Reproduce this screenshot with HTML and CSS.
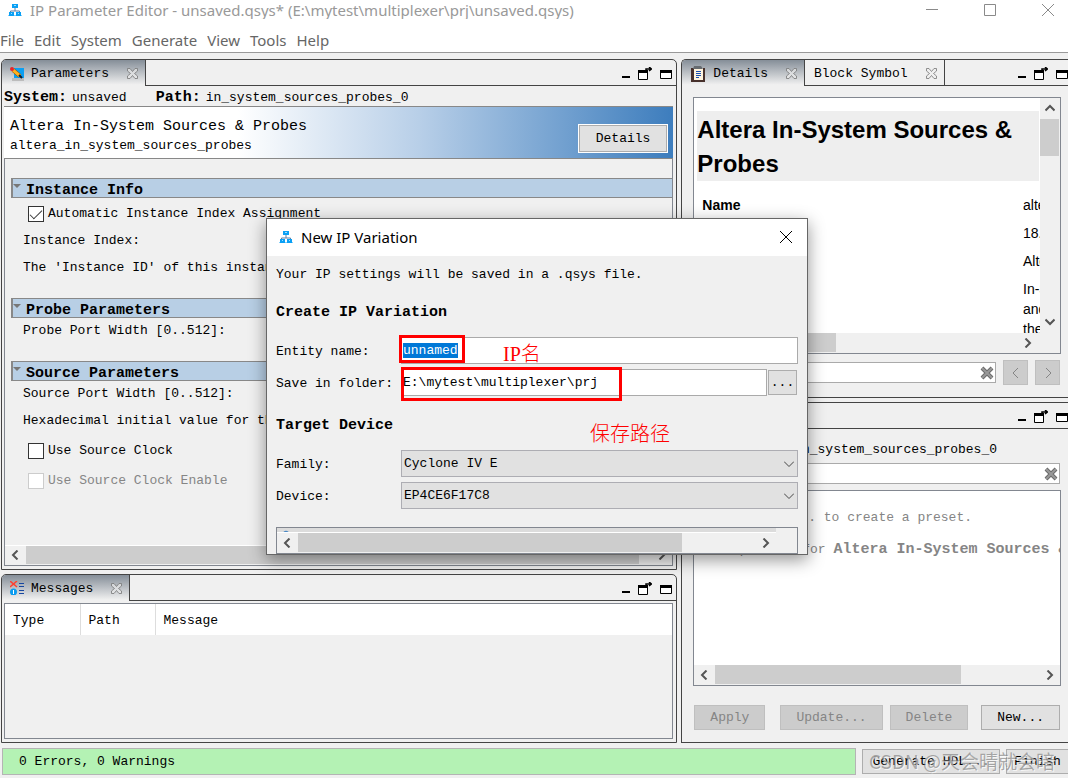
FILE: index.html
```html
<!DOCTYPE html>
<html lang="en">
<head>
<meta charset="utf-8">
<title>IP Parameter Editor</title>
<link rel="stylesheet" href="styles.css">
</head>
<body>
<svg class="defs" aria-hidden="true">
  <symbol id="app" viewBox="0 0 14 14">
    <path d="M7 5v3M2.500 10V8h9v2" fill="none" stroke="#5a7fa8" stroke-width="1"/>
    <path d="M4 1h6v4H4zM1 9h5v4H1zM8 9h5v4H8z" fill="#0aa0f5"/>
    <path d="M6 2h2v1H6zM3 10h1v1H3zM10 10h1v1h-1z" fill="#9fe0ff"/>
    <path d="M0 12.500h14" stroke="#0aa0f5" stroke-opacity=".5"/>
  </symbol>
  <symbol id="close-tab" viewBox="0 0 11 11">
    <path d="M.5.5h2.500l2.500 3 2.500-3h2.500v2.500l-3 2.500 3 2.500v2.500h-2.500l-2.500-3-2.500 3h-2.500v-2.500l3-2.500-3-2.500z" fill="#eee" fill-opacity=".6" stroke="#777" stroke-width=".8"/>
  </symbol>
  <symbol id="min" viewBox="0 0 8 14"><path d="M0 9h8v2H0z" fill="#000"/></symbol>
  <symbol id="float" viewBox="0 0 14 14">
    <path d="M.5 4h9v8.500h-9z" fill="#fff" stroke="#000"/><path d="M0 3h10v3H0z" fill="#000"/>
    <path d="M8 5V2h5M11 0l2.500 2L11 4" fill="none" stroke="#000" stroke-width="1.500"/>
  </symbol>
  <symbol id="max" viewBox="0 0 12 14"><path d="M.5 3.500h11v8H.5z" fill="#fff" stroke="#000"/><path d="M0 3h12v3H0z" fill="#000"/></symbol>
  <symbol id="arrow-left" viewBox="0 0 10 10"><path d="M7.500.5L3 5l4.500 4.500" fill="none" stroke="#555" stroke-width="2"/></symbol>
  <symbol id="arrow-right" viewBox="0 0 10 10"><path d="M2.500.5L7 5 2.500 9.500" fill="none" stroke="#555" stroke-width="2"/></symbol>
  <symbol id="arrow-up" viewBox="0 0 10 10"><path d="M.5 7.500L5 3l4.500 4.500" fill="none" stroke="#555" stroke-width="2"/></symbol>
  <symbol id="arrow-down" viewBox="0 0 10 10"><path d="M.5 2.500L5 7l4.500-4.500" fill="none" stroke="#555" stroke-width="2"/></symbol>
  <symbol id="clear" viewBox="0 0 14 14"><path d="M2 2l10 10M12 2L2 12" stroke="#6a6a6a" stroke-width="4"/><path d="M2 2l10 10M12 2L2 12" stroke="#989898" stroke-width="2"/></symbol>
  <symbol id="cross" viewBox="0 0 12 12"><path d="M0 0l12 12M12 0L0 12" stroke="currentColor"/></symbol>
</svg>

<header class="titlebar">
  <svg class="i14"><use href="#app"/></svg>
  <span class="title">IP Parameter Editor - unsaved.qsys* (E:\mytest\multiplexer\prj\unsaved.qsys)</span>
  <button class="win" aria-label="Minimize"><svg class="i12" viewBox="0 0 12 12"><path d="M0 5.500h12" stroke="currentColor"/></svg></button>
  <button class="win" aria-label="Maximize"><svg class="i12" viewBox="0 0 12 12"><path d="M.5.5h11v11H.5z" fill="none" stroke="currentColor"/></svg></button>
  <button class="win" aria-label="Close"><svg class="i12"><use href="#cross"/></svg></button>
</header>
<nav class="menubar">
  <button>File</button><button>Edit</button><button>System</button><button>Generate</button><button>View</button><button>Tools</button><button>Help</button>
</nav>

<main class="workspace">
  <div class="column left">
    <section class="panel parameters">
      <div class="strip">
        <div class="tab active">
          <svg class="i14" viewBox="0 0 14 14"><path d="M2 11h12v3H2z" fill="#bcbcbc"/><path d="M4 1h10v10H4z" fill="#0b9ff2"/><path d="M3 3l7 6" stroke="#7a4a10" stroke-width="4"/><path d="M3 3l7 6" stroke="#ffb020" stroke-width="3"/><path d="M9 8l3 3" stroke="#123" stroke-width="2"/><circle cx="2" cy="2" r="2" fill="#e8252a"/></svg>
          <span>Parameters</span><button class="x" aria-label="Close tab"><svg class="i11"><use href="#close-tab"/></svg></button>
        </div>
        <div class="rest"><svg class="w8"><use href="#min"/></svg><svg class="i14"><use href="#float"/></svg><svg class="w12"><use href="#max"/></svg></div>
      </div>
      <div class="path"><b>System:</b><span class="sys">unsaved</span><b>Path:</b><span>in_system_sources_probes_0</span></div>
      <div class="banner">
        <div class="ident"><div class="name">Altera In-System Sources &amp; Probes</div><div>altera_in_system_sources_probes</div></div>
        <button class="btn">Details</button>
      </div>
      <div class="pane params">
        <div class="form">
          <h2 class="bar">Instance Info</h2>
          <label class="check first"><input type="checkbox" checked>Automatic Instance Index Assignment</label>
          <p>Instance Index:</p>
          <p>The 'Instance ID' of this instance</p>
          <h2 class="bar next">Probe Parameters</h2>
          <p class="tight">Probe Port Width [0..512]:</p>
          <h2 class="bar next">Source Parameters</h2>
          <p class="tight">Source Port Width [0..512]:</p>
          <p>Hexadecimal initial value for the</p>
          <label class="check"><input type="checkbox">Use Source Clock</label>
          <label class="check off"><input type="checkbox" disabled>Use Source Clock Enable</label>
        </div>
        <div class="hscroll"><svg class="i10"><use href="#arrow-left"/></svg><div class="track"><div class="thumb full"></div></div><svg class="i10"><use href="#arrow-right"/></svg></div>
      </div>
    </section>
    <section class="panel messages">
      <div class="strip">
        <div class="tab active">
          <svg class="i14" viewBox="0 0 14 14"><path d="M0 0l7 6M7 0L0 6" stroke="#ff4030" stroke-width="1.500"/><circle cx="3.500" cy="11" r="3.500" fill="#0a9cf0"/><path d="M3.500 9v4" stroke="#fff"/><path d="M9 2.500h5M9 5.500h5M9 9.500h5M9 12.500h5" stroke="#1747a0"/></svg>
          <span>Messages</span><button class="x" aria-label="Close tab"><svg class="i11"><use href="#close-tab"/></svg></button>
        </div>
        <div class="rest"><svg class="w8"><use href="#min"/></svg><svg class="i14"><use href="#float"/></svg><svg class="w12"><use href="#max"/></svg></div>
      </div>
      <div class="pane msgs">
        <table><thead><tr><th class="c">Type</th><th class="c">Path</th><th>Message</th></tr></thead></table>
      </div>
    </section>
  </div>

  <div class="column right">
    <section class="panel details">
      <div class="strip">
        <div class="tab active">
          <svg class="i16" viewBox="0 0 16 16"><path d="M1 2h14v14H1z" fill="#47302b"/><path d="M4 2h9v12H4z" fill="#fff3dd"/><path d="M4 0h7l2 3H3z" fill="#666b70"/><path d="M6 5.500h5M6 7.500h5M6 9.500h5M6 11.500h3" stroke="#1a50b0"/></svg>
          <span>Details</span><button class="x" aria-label="Close tab"><svg class="i11"><use href="#close-tab"/></svg></button>
        </div>
        <div class="tab"><span>Block Symbol</span><button class="x" aria-label="Close tab"><svg class="i11"><use href="#close-tab"/></svg></button></div>
        <div class="rest"><svg class="w8"><use href="#min"/></svg><svg class="i14"><use href="#float"/></svg><svg class="w12"><use href="#max"/></svg></div>
      </div>
      <div class="pane doc">
        <div class="doc-row">
          <div class="doc-view">
            <h1>Altera In-System Sources &amp; Probes</h1>
            <dl><dt>Name</dt><dd>altera_in_system_sources_probes</dd><dt>Version</dt><dd>18.1</dd><dt>Author</dt><dd>Altera Corporation</dd><dt>Description</dt><dd>In-System Sources<br>and Probes for<br>the design</dd></dl>
          </div>
          <div class="vscroll"><svg class="i10"><use href="#arrow-up"/></svg><div class="vtrack"><div class="vthumb"></div></div><svg class="i10"><use href="#arrow-down"/></svg></div>
        </div>
        <div class="hscroll"><svg class="i10"><use href="#arrow-left"/></svg><div class="track"><div class="thumb short"></div></div><svg class="i10"><use href="#arrow-right"/></svg><i class="corner"></i></div>
      </div>
      <div class="find">
        <div class="search"><input type="text" aria-label="Find"><svg class="i14"><use href="#clear"/></svg></div>
        <button class="btn step" disabled aria-label="Previous"><svg class="i12" viewBox="0 0 12 12"><path d="M8 1L3 6l5 5" fill="none" stroke="#858585"/></svg></button>
        <button class="btn step" disabled aria-label="Next"><svg class="i12" viewBox="0 0 12 12"><path d="M4 1l5 5-5 5" fill="none" stroke="#858585"/></svg></button>
      </div>
    </section>
    <section class="panel presets">
      <div class="strip"><div class="rest"><svg class="w8"><use href="#min"/></svg><svg class="i14"><use href="#float"/></svg><svg class="w12"><use href="#max"/></svg></div></div>
      <div class="for">Presets for in_system_sources_probes_0</div>
      <div class="search wide"><input type="text" aria-label="Search presets"><svg class="i14"><use href="#clear"/></svg></div>
      <div class="pane list">
        <div class="hints"><p>Click New... to create a preset.</p><p class="none">No presets for <b>Altera In-System Sources &amp; Probes</b></p></div>
        <div class="hscroll"><svg class="i10"><use href="#arrow-left"/></svg><div class="track"><div class="thumb mid"></div></div><svg class="i10"><use href="#arrow-right"/></svg></div>
      </div>
      <div class="actions"><button class="btn apply" disabled>Apply</button><button class="btn" disabled>Update...</button><button class="btn" disabled>Delete</button><button class="btn new">New...</button></div>
    </section>
  </div>
</main>

<footer class="status">
  <div class="summary">0 Errors, 0 Warnings</div>
  <button class="btn gen">Generate HDL...</button>
  <button class="btn fin">Finish</button>
  <div class="watermark">CSDN @天会晴就会暗</div>
</footer>

<div class="dialog" role="dialog" aria-labelledby="dlg-title">
  <div class="dlg-head"><svg class="i14"><use href="#app"/></svg><span id="dlg-title">New IP Variation</span><button class="win" aria-label="Close"><svg class="i12"><use href="#cross"/></svg></button></div>
  <div class="dlg-body">
    <p>Your IP settings will be saved in a .qsys file.</p>
    <h2>Create IP Variation</h2>
    <div class="field"><label for="entity">Entity name:</label><input id="entity" type="text" value="unnamed"></div>
    <div class="field"><label for="folder">Save in folder:</label><input id="folder" type="text" value="E:\mytest\multiplexer\prj"><button class="btn browse">...</button></div>
    <h2 class="target">Target Device</h2>
    <div class="field"><label for="family">Family:</label><span class="combo"><select id="family"><option>Cyclone IV E</option></select><svg class="i10" viewBox="0 0 10 10"><path d="M0 2.500l5 5 5-5" fill="none" stroke="#444"/></svg></span></div>
    <div class="field"><label for="device">Device:</label><span class="combo"><select id="device"><option>EP4CE6F17C8</option></select><svg class="i10" viewBox="0 0 10 10"><path d="M0 2.500l5 5 5-5" fill="none" stroke="#444"/></svg></span></div>
    <div class="info">
      <div class="sliver"><svg class="arc" viewBox="0 0 10 3"><path d="M1 3q4-4 8 0z" fill="#4a88c4"/></svg></div>
      <div class="hscroll"><svg class="i10"><use href="#arrow-left"/></svg><div class="track"><div class="thumb dlg-thumb"></div></div><svg class="i10"><use href="#arrow-right"/></svg></div>
    </div>
  </div>
  <div class="mark mark-name"></div>
  <div class="mark mark-folder"></div>
  <div class="note note-name">IP名</div>
  <div class="note note-folder">保存路径</div>
</div>
<script src="main.js"></script>
</body>
</html>
```
FILE: styles.css
```css
* { box-sizing: border-box; }
body { margin: 0; height: 100vh; display: flex; flex-direction: column; overflow: hidden; position: relative; background: #f0f0f0; color: #000; font: 13px/18px "Liberation Mono", "Noto Sans CJK SC", monospace; }
button, input, select { font: inherit; color: inherit; }
h1, h2, p, dl, dd { margin: 0; }
svg { flex: none; display: block; }
b, h2 { font-size: 15px; font-weight: bold; line-height: 18px; }
.defs { position: absolute; width: 0; height: 0; }
.i10 { width: 10px; height: 10px; }
.i11 { width: 11px; height: 11px; }
.i12 { width: 12px; height: 12px; }
.i14 { width: 14px; height: 14px; }
.i16 { width: 16px; height: 16px; }
.w8 { width: 8px; height: 14px; }
.w12 { width: 12px; height: 14px; }

.titlebar { flex: none; display: flex; align-items: center; height: 19px; padding: 0 14px 0 8px; background: #fff; color: #999; font-family: "Noto Sans", sans-serif; font-size: 15px; }
.title { flex: 1; margin-left: 8px; white-space: nowrap; }
.win { padding: 0; border: 0; background: none; }
.titlebar .win { margin-left: 46px; color: #8a8a8a; }
.titlebar .win:first-of-type { margin-left: 0; }
.menubar { flex: none; display: flex; gap: 10px; height: 34px; padding-top: 9px; background: #fff; border-bottom: 1px solid #999; }
.menubar button { padding: 0; border: 0; height: 24px; background: none; color: #666; font-family: "Noto Sans", sans-serif; font-size: 15px; }

.workspace { flex: 1; min-height: 0; display: grid; grid-template-columns: 677fr 387fr; gap: 4px; padding: 6px 0 5px 1px; }
.column { min-width: 0; min-height: 0; display: flex; flex-direction: column; gap: 4px; }
.panel { min-height: 0; display: flex; flex-direction: column; border: 1px solid #444; border-radius: 5px 5px 0 0; overflow: hidden; }
.right .panel { border-right: 0; border-top-right-radius: 0; }
.parameters { flex: 512; }
.messages { flex: 168; }
.details { flex: 339; }
.presets { flex: 341; }

.strip { flex: none; display: flex; height: 26px; }
.tab { display: flex; align-items: center; padding: 1px 7px 0 8px; border-right: 1px solid #444; border-bottom: 1px solid #444; white-space: nowrap; }
.tab.active { border-bottom: 0; background: linear-gradient(#858e98, #f0f0f0 95%); }
.tab span { margin: 0 18px 0 7px; padding-top: 1px; }
.tab:not(.active) span { margin-left: 1px; }
.x { padding: 0; border: 0; background: none; }
.rest { flex: 1; display: flex; align-items: center; justify-content: flex-end; gap: 8px; padding: 3px 4px 0 0; border-bottom: 1px solid #444; }
.right .rest { padding-right: 0; }

.path { flex: none; display: flex; height: 20px; align-items: center; padding: 3px 0 0 2px; white-space: nowrap; }
.path b { margin-right: 5px; }
.sys { margin-right: 29px; }
.banner { flex: none; display: flex; align-items: center; justify-content: space-between; height: 53px; margin: 0 3px 0 2px; padding: 0 6px; border-top: 1px solid #888; border-bottom: 1px solid #888; background: linear-gradient(90deg, #fff 35%, #b8cfe8 62%, #3d7dbd); }
.ident { padding-top: 6px; }
.name { font-size: 15px; line-height: 20px; }
.btn { display: flex; align-items: center; justify-content: center; height: 25px; padding: 0 15px; border: 1px solid #adadad; background: #e1e1e1; white-space: nowrap; }
.btn:disabled { background: #ccc; border-color: #bfbfbf; color: #858585; }
.banner .btn { height: 27px; padding: 0 16px; margin-top: 12px; outline: 1px solid #fff; }
.pane { border: 1px solid #828790; min-height: 0; display: flex; flex-direction: column; overflow: hidden; }
.params { flex: 1; margin: 0 3px 3px 2px; border-top: 0; }
.form { flex: 1; min-height: 0; padding: 19px 0 0 6px; overflow: hidden; white-space: nowrap; }
.bar { position: relative; height: 20px; padding: 3px 0 0 13px; border: 1px solid #888; border-left-width: 2px; border-right: 0; background: #b8cfe5; }
.bar::before { content: ""; position: absolute; left: 0; top: 5px; border: 4px solid transparent; border-top-color: #777; border-bottom: 0; }
.form p { margin: 9px 0 0 12px; }
.form .tight { margin-top: 4px; }
.form .next { margin-top: 21px; }
.check { display: flex; align-items: center; gap: 4px; height: 18px; margin: 12px 0 0 17px; }
.check.first { margin: 7px 0 8px 17px; }
.check.off { color: #858585; }
.check input { appearance: none; display: grid; place-items: center; width: 16px; height: 16px; margin: 0; border: 1px solid #333; background: #fff; }
.check input:disabled { border-color: #ccc; }
.check input:checked::after { content: ""; width: 11px; height: 5px; margin-bottom: 3px; border: solid #333; border-width: 0 0 1px 1px; rotate: -45deg; }

.hscroll { flex: none; display: flex; align-items: center; gap: 6px; height: 20px; padding: 0 5px; background: #f0f0f0; }
.params .hscroll { border-top: 1px solid #fff; }
.track { flex: 1; align-self: stretch; display: flex; }
.thumb { background: #cdcdcd; margin-bottom: 1px; }
.full { width: 98%; }
.short { width: 40%; }
.mid { width: 76%; }
.corner { width: 16px; }

.msgs { flex: 1; margin: 2px 3px 3px 2px; }
table { width: 100%; border-collapse: collapse; }
th { height: 31px; padding: 4px 8px 0; background: #fff; text-align: left; font-weight: normal; }
.c { width: 75px; border-right: 1px solid #ddd; }

.doc { flex: 1; margin: 11px 7px 0 11px; }
.doc-row { flex: 1; min-height: 0; display: flex; }
.doc-view { flex: 1; min-width: 0; overflow: hidden; padding: 13px 1px 0 3px; background: #fff; font-family: "Liberation Sans", sans-serif; font-size: 14px; line-height: 20px; }
.doc-view h1 { padding-top: 2px; background: #eee; font-size: 24px; line-height: 34px; }
dl { display: grid; grid-template-columns: 1fr 16px; row-gap: 8px; margin-top: 14px; padding-left: 5px; white-space: nowrap; }
dt { font-weight: bold; }
.vscroll { flex: none; width: 20px; display: flex; flex-direction: column; align-items: center; gap: 6px; padding: 5px 0 6px; background: #f0f0f0; }
.vtrack { flex: 1; align-self: stretch; }
.vthumb { width: 19px; height: 37px; background: #cdcdcd; }
.find { flex: none; display: flex; align-items: center; gap: 7px; margin: 6px 8px 12px 11px; }
.search { flex: 1; display: flex; align-items: center; height: 21px; padding-right: 1px; border: 1px solid #aaa; background: #fff; }
.search input { flex: 1; min-width: 0; height: 18px; border: 0; outline: 0; background: none; }
.step { width: 25px; padding: 0; }

.for { flex: none; height: 34px; padding: 12px 71px 0 0; text-align: right; white-space: nowrap; }
.search.wide { flex: none; margin: 0 8px 0 11px; }
.list { flex: 1; margin: 6px 7px 19px 11px; background: #fff; }
.hints { flex: 1; padding: 18px 0 0 22px; color: #858585; white-space: nowrap; }
.hints p { margin: 0 0 14px 6px; }
.hints .none { margin-left: 0; }
.actions { flex: none; display: flex; gap: 7px; margin: 0 8px 12px 12px; }
.apply { margin-right: 8px; }
.new { margin-left: auto; }

.status { flex: none; position: relative; display: flex; align-items: center; gap: 6px; height: 30px; padding: 0 0 3px 2px; }
.summary { flex: 1; height: 27px; padding: 4px 16px; border: 1px solid #b4b4b4; background: #b4f2b4; }
.gen { width: 138px; padding: 0; }
.fin { width: 62px; padding: 0; border-right: 0; }
.watermark { position: absolute; right: 13px; top: 0; font: 19px/26px "Noto Sans CJK SC", sans-serif; color: rgba(120, 120, 120, 0.6); text-shadow: 1px 1px 0 rgba(255, 255, 255, 0.7); white-space: nowrap; }

.dialog { position: absolute; left: 266px; top: 218px; width: 542px; height: 337px; display: flex; flex-direction: column; border: 1px solid #666; background: #f0f0f0; box-shadow: 0 5px 16px rgba(0, 0, 0, 0.42); }
.dlg-head { flex: none; display: flex; align-items: center; height: 37px; padding: 0 15px 2px 12px; background: #fff; font-family: "Noto Sans", sans-serif; font-size: 15px; }
.dlg-head span { flex: 1; margin-left: 8px; }
.dlg-body { flex: 1; min-height: 0; padding: 10px 9px 0; display: flex; flex-direction: column; }
.dlg-body h2 { margin: 20px 0 15px; }
.dlg-body .target { margin: 16px 0 15px; }
.field { display: flex; align-items: center; height: 27px; margin-bottom: 5px; }
.field label { width: 125px; flex: none; padding-top: 2px; white-space: nowrap; }
.field input { flex: 1; min-width: 0; height: 27px; padding: 0 1px; border: 1px solid #aaa; outline: 0; background: #fff; }
.field input::selection { background: #0078d7; color: #fff; }
.browse { width: 29px; margin: 0 1px; padding: 0; }
.combo { flex: 1; display: grid; align-items: center; }
.combo > * { grid-area: 1 / 1; }
.combo svg { justify-self: end; margin-right: 4px; pointer-events: none; }
select { appearance: none; width: 100%; height: 27px; padding: 0 2px; border: 1px solid #adadb3; border-radius: 0; background: #e1e1e1; }
.info { flex: 1; min-height: 0; margin-top: 13px; border: 1px solid #828790; }
.sliver { height: 5px; margin-right: 21px; padding: 2px 0 0 4px; background: #dcdcdc; border-bottom: 1px solid #fff; }
.arc { width: 10px; height: 2px; }
.info .hscroll { padding-right: 26px; }
.dlg-thumb { width: 84%; }
.mark { position: absolute; border: 3px solid #f00; }
.mark-name { left: 132px; top: 116px; width: 66px; height: 28px; }
.mark-folder { left: 134px; top: 148px; width: 221px; height: 34px; }
.note { position: absolute; font: 20px/24px "Liberation Serif", "Noto Sans CJK SC", serif; font-weight: 300; color: #f00; }
.note-name { left: 236px; top: 123px; }
.note-folder { left: 323px; top: 203px; }
```
FILE: main.js
```js
document.getElementById("entity").select();
```
